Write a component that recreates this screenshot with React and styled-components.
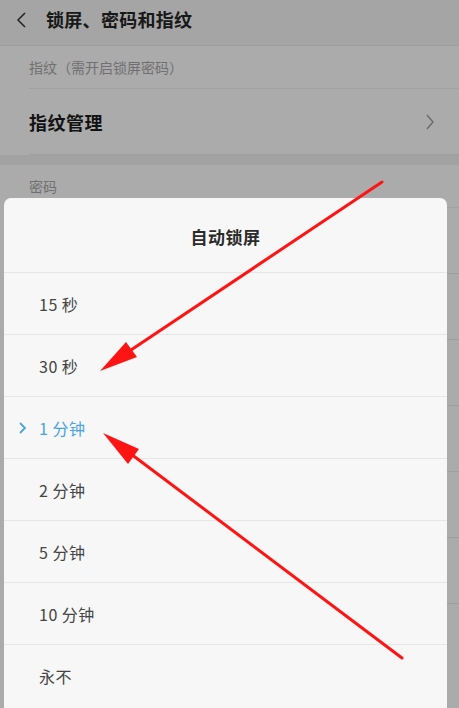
import React from "react";
import styled, { createGlobalStyle } from "styled-components";

const GlobalStyle = createGlobalStyle`
  html, body {
    margin: 0;
    padding: 0;
    background: #ababab;
  }
  body {
    font-family: "Noto Sans CJK SC", "Noto Sans", sans-serif;
  }
`;

const options = [
  { label: "15 秒" },
  { label: "30 秒" },
  { label: "1 分钟", selected: true },
  { label: "2 分钟" },
  { label: "5 分钟" },
  { label: "10 分钟" },
  { label: "永不" },
];

const App = () => {
  return (
    <>
      <GlobalStyle />
      <Page>
        <Screen>
          <TopBar>
            <BackIcon width="12" height="18" viewBox="0 0 12 18">
              <polyline points="10,2 3,9 10,16" />
            </BackIcon>
            <TopTitle>锁屏、密码和指纹</TopTitle>
          </TopBar>
          <Section>
            <SectionLabel>指纹（需开启锁屏密码）</SectionLabel>
            <SettingRow>
              <SettingText>指纹管理</SettingText>
              <RowArrow width="10" height="18" viewBox="0 0 10 18">
                <polyline points="2,2 8,9 2,16" />
              </RowArrow>
            </SettingRow>
          </Section>
          <SectionGap />
          <Section>
            <SectionLabel>密码</SectionLabel>
            <SettingRow />
            <SettingRow />
            <SettingRow />
            <SettingRow />
            <SettingRow />
            <SettingRow />
          </Section>
        </Screen>
        <Mask />
        <Sheet>
          <SheetTitle>自动锁屏</SheetTitle>
          {options.map((o) => (
            <Option key={o.label} selected={o.selected}>
              {o.selected && (
                <CheckMark width="9" height="14" viewBox="0 0 9 14">
                  <polyline points="2,2 7,7 2,12" />
                </CheckMark>
              )}
              {o.label}
            </Option>
          ))}
        </Sheet>
        <Arrows width="459" height="708" viewBox="0 0 459 708">
          <line x1="382" y1="182" x2="128" y2="352" />
          <polygon points="100,371 137,357 126,342" />
          <line x1="402" y1="658" x2="131" y2="454" />
          <polygon points="103,433 128,464 139,449" />
        </Arrows>
      </Page>
    </>
  );
};

const Page = styled.div`
  position: relative;
  width: 459px;
  height: 708px;
  overflow: hidden;
`;

const Screen = styled.div`
  display: flex;
  flex-direction: column;
  background: #ffffff;
  height: 100%;
`;

const TopBar = styled.div`
  height: 46px;
  display: flex;
  align-items: center;
  gap: 19px;
  padding-left: 15px;
  background: #f7f7f7;
  border-bottom: 1px solid #ececec;
  box-sizing: border-box;
`;

const BackIcon = styled.svg`
  fill: none;
  stroke: #333;
  stroke-width: 1.5;
  margin-top: -6px;
`;

const TopTitle = styled.div`
  font-size: 18px;
  font-weight: 700;
  color: #262626;
  margin-top: -8px;
  letter-spacing: 0.3px;
`;

const Section = styled.div`
  display: flex;
  flex-direction: column;
  padding-left: 29px;
  background: #ffffff;
`;

const SectionLabel = styled.div`
  height: 43px;
  display: flex;
  align-items: center;
  font-size: 14px;
  color: #a8a8a8;
  border-bottom: 1px solid #efefef;
  box-sizing: border-box;
`;

const SettingRow = styled.div`
  height: 66px;
  display: flex;
  align-items: center;
  justify-content: space-between;
  padding-right: 24px;
  border-bottom: 1px solid #ededed;
  box-sizing: border-box;
`;

const SettingText = styled.div`
  font-size: 18px;
  font-weight: 700;
  color: #1c1c1c;
  letter-spacing: 0.5px;
`;

const RowArrow = styled.svg`
  fill: none;
  stroke: #9a9a9a;
  stroke-width: 1.3;
`;

const SectionGap = styled.div`
  height: 10px;
  background: #f2f2f2;
`;

const Mask = styled.div`
  position: absolute;
  inset: 0;
  background: rgba(0, 0, 0, 0.33);
`;

const Sheet = styled.div`
  position: absolute;
  left: 4px;
  width: 443px;
  bottom: 0;
  height: 510px;
  background: #f7f7f7;
  border-radius: 7px 7px 0 0;
  display: flex;
  flex-direction: column;
`;

const SheetTitle = styled.div`
  height: 75px;
  display: flex;
  align-items: center;
  justify-content: center;
  font-size: 17px;
  font-weight: 700;
  color: #2a2a2a;
  border-bottom: 1px solid #e6e6e6;
  box-sizing: border-box;
  padding-top: 2px;
  letter-spacing: 0.5px;
`;

const Option = styled.div`
  height: 62px;
  display: flex;
  align-items: center;
  position: relative;
  padding-left: 35px;
  font-size: 16px;
  color: ${(p) => (p.selected ? "#4aa3e0" : "#444444")};
  border-bottom: 1px solid #e6e6e6;
  box-sizing: border-box;
  letter-spacing: 0.5px;
  &:last-child {
    border-bottom: none;
  }
`;

const CheckMark = styled.svg`
  position: absolute;
  left: 14px;
  top: 24px;
  fill: none;
  stroke: #4aa3e0;
  stroke-width: 1.8;
`;

const Arrows = styled.svg`
  position: absolute;
  left: 0;
  top: 0;
  pointer-events: none;
  line {
    stroke: #ff1414;
    stroke-width: 3;
    stroke-linecap: round;
  }
  polygon {
    fill: #ff1414;
  }
`;

export default App;
